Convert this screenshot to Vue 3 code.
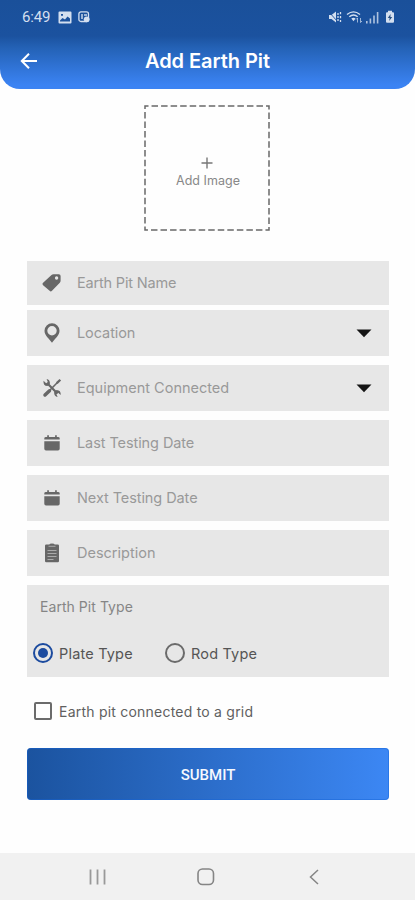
<script setup>
import { ref } from 'vue'

const fields = [
  { label: 'Earth Pit Name', icon: 'tag', cls: 'name' },
  { label: 'Location', icon: 'pin', select: true, cls: 'location' },
  { label: 'Equipment Connected', icon: 'tools', select: true, cls: 'equipment' },
  { label: 'Last Testing Date', icon: 'calendar', cls: 'last' },
  { label: 'Next Testing Date', icon: 'calendar', cls: 'next' },
  { label: 'Description', icon: 'clipboard', cls: 'description' },
]
const pitType = ref('Plate Type')
const types = [
  { label: 'Plate Type', cls: 'plate' },
  { label: 'Rod Type', cls: 'rod' },
]
</script>

<template>
  <div class="screen">
    <header class="top">
      <div class="status">
        <span class="time">6:49</span>
        <svg class="s-image" width="14" height="13" viewBox="0 0 14 13"><path fill-rule="evenodd" d="M1.500 .5h11q1 0 1 1v10q0 1-1 1h-11q-1 0-1-1v-10q0-1 1-1zM2 10.500h10V7.500L9.500 5.500 7 8.500 4.500 7 2 9.500zM3 3v1.800h2V3z" /></svg>
        <svg class="s-note" width="12" height="12" viewBox="0 0 12 12"><rect x=".9" y=".9" width="9.600" height="9.600" rx="2" fill="none" stroke="currentColor" stroke-width="1.300" /><path d="M3 3h2v5H3zM6 3h3v2H6z" opacity=".7" /><circle cx="8.700" cy="8.300" r="2.900" /></svg>
        <span class="grow"></span>
        <svg class="s-mute" width="14" height="14" viewBox="0 0 14 14"><path d="M1 5h2.500L8 1.500v11L3.500 9H1z" /><path d="M1 2l8.500 9.500" fill="none" stroke="#1c509a" stroke-width=".9" /><path d="M10 3v2M10 6v2M10 9v2M12.500 2v2.200M12.500 6v2.200M12.500 10v2" fill="none" stroke="currentColor" stroke-width="1.300" /></svg>
        <svg class="s-wifi" width="17" height="14" viewBox="0 0 17 14"><g fill="none" stroke="currentColor" stroke-width="1.400"><path d="M1 4.500Q7.500-.8 14 4.500M3.300 6.700Q7.500 3.300 11.700 6.700" /><path d="M11.500 12.500V8M10 9.500L11.500 8M14.500 8v4.500L16 11" stroke-width="1" opacity=".7" /></g><path d="M5.300 8.500Q7.500 7 9.600 8.500L7.500 11.200z" /></svg>
        <svg class="s-signal" width="13" height="13" viewBox="0 0 13 13"><path d="M0 10h1.600v2.500H0zM3.600 7.500h1.600v5H3.600zM7.200 4.500h1.600v8H7.200zM10.800 1h1.600v11.500h-1.600z" /></svg>
        <svg class="s-battery" width="10" height="14" viewBox="0 0 10 14"><path d="M3 .8h4v1.500h1q1 0 1 1v8.500q0 1-1 1H2q-1 0-1-1V3.300q0-1 1-1h1z" /><path d="M5.600 4L2.800 8h1.800l-.4 3L7.200 7H5.400z" fill="#254e82" /></svg>
      </div>
      <div class="appbar">
        <svg class="back" width="18" height="18" viewBox="0 0 18 18"><path d="M17 9H2.200M9 1.800L1.800 9 9 16.200" fill="none" stroke="currentColor" stroke-width="2" /></svg>
        <h1><span class="title">Add Earth Pit</span></h1>
      </div>
    </header>

    <main>
      <button class="upload" type="button">
        <svg class="dash" width="126" height="126" viewBox="0 0 126 126"><rect x="1" y="1" width="124" height="124" fill="none" stroke="#686868" stroke-width="1.500" stroke-dasharray="6.500 3.040" stroke-dashoffset="3" /></svg>
        <svg width="12" height="12" viewBox="0 0 12 12"><path d="M6 .5v11M.5 6h11" stroke="#777" stroke-width="1.400" /></svg>
        <span class="upload-text">Add Image</span>
      </button>

      <div class="fields">
        <div v-for="f in fields" :key="f.label" class="field" :class="f.cls">
          <svg class="icon" width="20" height="20" viewBox="0 0 20 20">
            <path v-if="f.icon === 'tag'" fill-rule="evenodd" d="M1.100 9.800L9.500 2Q10.300 1.200 11.500 1.200h5.300q1.800 0 1.800 1.800v4.800q0 1.100-.8 1.900L10 17.800q-1.200 1.200-2.400 0L1.100 12.200q-1.200-1.200 0-2.400zM14.600 3.300a1.700 1.700 0 1 0 0 3.400 1.700 1.700 0 0 0 0-3.400z" />
            <path v-else-if="f.icon === 'pin'" fill-rule="evenodd" d="M10 .2a7.500 7.500 0 0 0-7.500 7.500c0 4.800 4.500 7.500 7.500 12.100 3-4.600 7.500-7.300 7.500-12.100A7.500 7.500 0 0 0 10 .2zM10 3a4.700 4.700 0 1 1 0 9.400 4.700 4.700 0 0 1 0-9.400z" />
            <g v-else-if="f.icon === 'tools'">
              <path d="M5.500 5.500l10 10" fill="none" stroke="currentColor" stroke-width="2.200" />
              <path d="M1.500 2.800l2.700 2.500L5.800 4 4.600 1Q7.800 1.300 8 5.500L5.500 8Q1 8 1.500 2.800zM18.700 17l-2.600-2.300-1.700 1.400 1.200 2.800q-3.500-.3-3.500-4.600l2.500-2.300q4.500.2 4.100 5z" />
              <path d="M3 17l4.500-4.200" fill="none" stroke="currentColor" stroke-width="3.500" stroke-linecap="round" />
              <path d="M6.500 13.500L15.700 4.300" fill="none" stroke="currentColor" stroke-width="1.600" />
              <path d="M14 4.300L17.500.9l1.600 1.600-3.500 3.500z" />
            </g>
            <path v-else-if="f.icon === 'calendar'" d="M2.300 8.300h15.400v7.500q0 1.700-1.700 1.700H4q-1.700 0-1.700-1.700zM2.300 6.600V5.200q0-1.200 1.700-1.200h1.200V2.300h1.700V4h6.200V2.300h1.700V4H16q1.700 0 1.700 1.200v1.400z" />
            <g v-else>
              <path d="M4.200 1.500h3.100Q7.500.5 10 .5t2.700 1h3.100q1.200 0 1.200 1.200V18q0 1.200-1.200 1.200H4.200Q3 19.200 3 18V2.700q0-1.200 1.200-1.200z" />
              <path d="M6.500 3.300h7M5.500 7.500h9M5.500 10.500h9M5.500 13.500h9M5.500 16.500h6" stroke="#aaa" stroke-width="1" />
            </g>
          </svg>
          <span class="label">{{ f.label }}</span>
          <svg v-if="f.select" class="caret" width="16" height="9" viewBox="0 0 16 9"><path d="M.5.500h15L8 8.300z" /></svg>
        </div>
      </div>

      <section class="types">
        <div class="types-title"><span class="types-text">Earth Pit Type</span></div>
        <div class="options">
          <label v-for="t in types" :key="t.label" class="option" :class="[t.cls, { on: pitType === t.label }]" @click="pitType = t.label">
            <span class="radio"></span><span class="option-text">{{ t.label }}</span>
          </label>
        </div>
      </section>

      <label class="grid-check"><span class="box"></span><span class="check-text">Earth pit connected to a grid</span></label>
      <button class="submit" type="button"><span class="submit-text">SUBMIT</span></button>
    </main>

    <nav>
      <svg width="17" height="16" viewBox="0 0 17 16"><path d="M1.500 .5v15M8.500 .5v15M15.500 .5v15" stroke="#999" stroke-width="1.800" /></svg>
      <svg class="home" width="18" height="18" viewBox="0 0 18 18"><rect x="1" y="1" width="15.500" height="15.500" rx="4.500" fill="none" stroke="#858585" stroke-width="1.600" /></svg>
      <svg width="10" height="16" viewBox="0 0 10 16"><path d="M9 1L1.500 8 9 15" fill="none" stroke="#858585" stroke-width="1.500" /></svg>
    </nav>
  </div>
</template>

<style>
body { margin: 0; background: #fff; }
</style>

<style scoped>
.screen { width: 415px; height: 900px; display: flex; flex-direction: column; background: #fefefe; font-family: Inter, "Liberation Sans", sans-serif; overflow: hidden; }
svg { display: block; flex: none; fill: currentColor; }
span { white-space: nowrap; }
button { border: 0; padding: 0; margin: 0; font-family: inherit; }
.top { height: 89px; flex: none; box-sizing: border-box; color: #fff; background: linear-gradient(#1a509a 0, #1b529f 36px, #2462b6 48px, #3b83f3 85px, #3b83f3 100%); border-radius: 0 0 20px 20px; }
.status { height: 34px; display: flex; align-items: center; padding: 0 20px 0 22px; color: #d3dff0; }
.time { font: 400 15px/20px Roboto, sans-serif; width: 36px; letter-spacing: -.2px; }
.s-note { margin-left: 6px; }
.grow { flex: 1; }
.s-wifi { margin-left: 4px; }
.s-signal { margin-left: 3px; opacity: .8; }
.s-battery { margin-left: 6px; }
.appbar { display: flex; align-items: center; height: 54px; padding-left: 20px; }
h1 { margin: 0 38px 0 0; flex: 1; text-align: center; font-size: 20px; font-weight: 600; line-height: 26px; letter-spacing: -.05px; }
main { flex: 1; padding: 16px 26px 0 27px; display: flex; flex-direction: column; }
.upload { position: relative; width: 126px; height: 126px; margin-left: 117px; display: flex; flex-direction: column; align-items: center; padding-top: 51.500px; gap: 4px; background: transparent; color: #888; box-sizing: border-box; }
.dash { position: absolute; inset: 0; }
.upload-text { margin-left: 2px; font-size: 12.500px; line-height: 16px; letter-spacing: .02px; }
.fields { margin-top: 30px; display: flex; flex-direction: column; gap: 9px; }
.field { height: 46px; box-sizing: border-box; display: flex; align-items: center; padding: 0 17px 0 15px; background: #e7e7e7; }
.name { height: 44px; margin-bottom: -4px; }
.icon { color: #676767; }
.label { margin-left: 15px; font-size: 14.500px; line-height: 20px; color: #999; font-weight: 400; flex: 1; }
.name .label { letter-spacing: -.18px; }
.location .label, .last .label, .next .label { letter-spacing: -.08px; }
.caret { color: #151515; }
.types { height: 92px; margin-top: 9px; box-sizing: border-box; padding: 12px 6px 0; background: #e7e7e7; }
.types-title { padding-left: 7px; font-size: 14px; line-height: 20px; color: #858585; letter-spacing: .05px; }
.options { display: flex; margin-top: 25px; }
.option { display: flex; align-items: center; width: 132px; height: 22px; }
.radio { width: 20px; height: 20px; box-sizing: border-box; border: 2px solid #6b6b6b; border-radius: 50%; display: grid; place-items: center; }
.on .radio { border: 2px solid #1c4b9f; }
.on .radio::after { content: ""; width: 10px; height: 10px; border-radius: 50%; background: #1c4b9f; }
.option-text { margin-left: 6px; font-size: 14.500px; color: #555; letter-spacing: .18px; }
.grid-check { display: flex; align-items: center; height: 24px; margin: 22px 0 0 7px; }
.box { width: 18px; height: 18px; box-sizing: border-box; border: 2px solid #6b6b6b; border-radius: 2px; }
.check-text { margin-left: 7px; font-size: 14px; color: #606060; letter-spacing: .22px; }
.submit { height: 52px; margin-top: 25px; border-radius: 4px; color: #f5f8ff; background: linear-gradient(90deg, #1b539f, #3c87f4); font: 500 15px/20px Roboto, sans-serif; box-shadow: inset 0 0 0 1px rgba(20, 100, 215, .45); }
.submit-text { position: relative; top: 1px; }
nav { height: 47px; flex: none; background: #f1f1f1; display: flex; align-items: center; padding: 1px 0 0 89px; box-sizing: border-box; }
nav .home { margin: 0 94px 0 91px; }
</style>
